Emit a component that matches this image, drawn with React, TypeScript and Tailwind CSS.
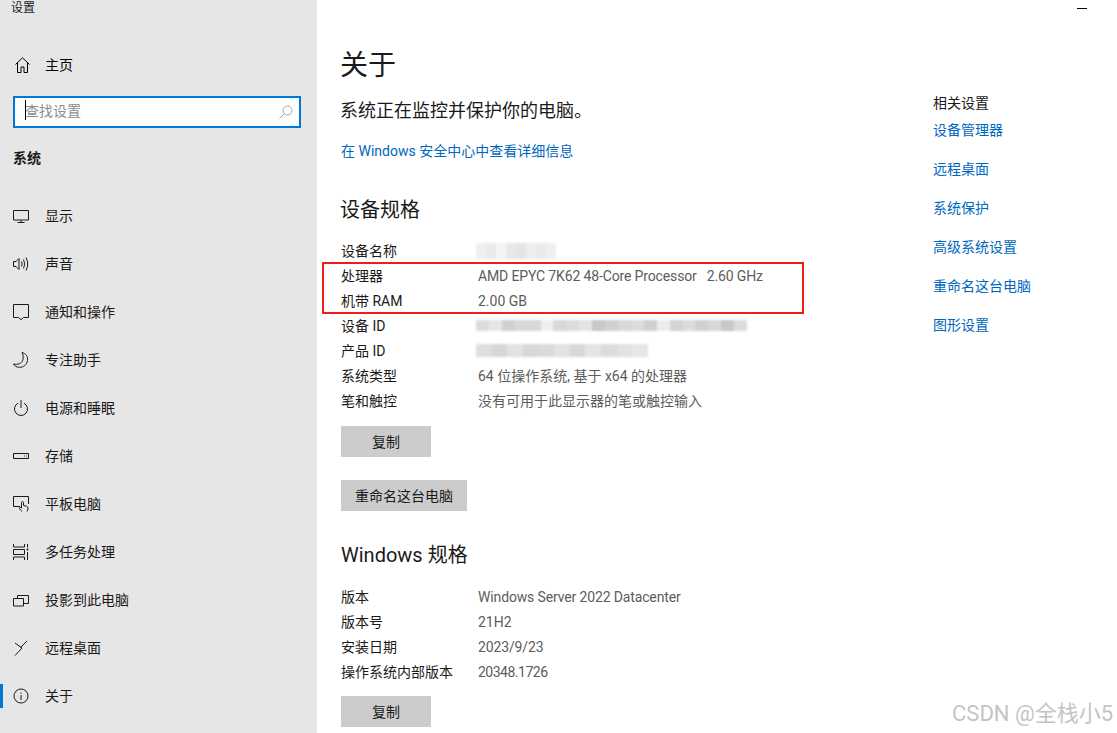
import { ReactNode } from 'react'

const FONT = "font-['Roboto','Noto_Sans_CJK_SC',sans-serif]"

const Ico = ({ children }: { children: ReactNode }) => (
  <svg width="16" height="16" viewBox="0 0 16 16" fill="none" stroke="#1a1a1a" strokeWidth="1" className="shrink-0">
    {children}
  </svg>
)

const navItems: { label: string; icon: ReactNode; active?: boolean }[] = [
  {
    label: '显示',
    icon: (
      <Ico>
        <path d="M0.500 2.500h15v9.500h-15zM8 12v2.500M4.500 14.500h7" />
      </Ico>
    ),
  },
  {
    label: '声音',
    icon: (
      <Ico>
        <path d="M0.500 5.500h2.500l3-3v11l-3-3H0.500zM8.500 5.500q1.500 2.500 0 5M10.500 3.500q2.500 4.500 0 9M13 1.500q3.500 6.500 0 13" />
      </Ico>
    ),
  },
  {
    label: '通知和操作',
    icon: (
      <Ico>
        <path d="M0.500 0.500h15v13h-5l-2.500 2.200-2.500-2.200h-5z" />
      </Ico>
    ),
  },
  {
    label: '专注助手',
    icon: (
      <Ico>
        <path d="M9 0.500c4 1 6 4 5.500 8-0.500 4-4 7-8 6.800-3 0-5-1.300-6-3.300 4.500 1 8-0.500 9.300-3.800 0.800-2.600 0.500-5.500-0.800-7.700z" />
      </Ico>
    ),
  },
  {
    label: '电源和睡眠',
    icon: (
      <Ico>
        <path d="M8 0v8M5 3.200a6.500 6.500 0 1 0 6 0" />
      </Ico>
    ),
  },
  {
    label: '存储',
    icon: (
      <Ico>
        <path d="M0.500 5.500h15v5h-15zM11 8h0.800M13 8h0.800" />
      </Ico>
    ),
  },
  {
    label: '平板电脑',
    icon: (
      <Ico>
        <path d="M7 10.500H0.500v-10h15v7.500M9 15.500c-1-0.700-2-2-2.500-3-0.500-1 0.700-1.500 1.500-0.800l0.500 0.500V6.500c0-1.300 2-1.300 2 0v3l3 0.700c1 0.300 1.500 1 1.500 2 0 1.500-0.500 2.500-1 3.300" />
      </Ico>
    ),
  },
  {
    label: '多任务处理',
    icon: (
      <Ico>
        <path d="M0.500 0v3h11V0M0.500 16v-3h11v3M0.500 5.500h11v5h-11zM14.500 0v3.500M14.500 8v8" />
        <circle cx="14.500" cy="5.500" r="1" fill="#1a1a1a" stroke="none" />
      </Ico>
    ),
  },
  {
    label: '投影到此电脑',
    icon: (
      <Ico>
        <path d="M4.500 6.500V3.500h11v8h-4.500M0.500 6.500h10v7.500h-10z" />
      </Ico>
    ),
  },
  {
    label: '远程桌面',
    icon: (
      <Ico>
        <path d="M14 1L7.500 7.500M2 3l7 5-7 7.500" />
      </Ico>
    ),
  },
  {
    label: '关于',
    active: true,
    icon: (
      <Ico>
        <circle cx="8" cy="8" r="7" />
        <path d="M8 7v5M8 4.500v1.200" />
      </Ico>
    ),
  },
]

const NavRow = ({ label, icon, active }: { label: string; icon: ReactNode; active?: boolean }) => (
  <div className="relative flex h-12 items-center gap-4 pl-[13px] text-sm text-[#1a1a1a]">
    {active && <div className="absolute left-0 top-3 h-6 w-[3px] bg-[#0078d7]" />}
    {icon}
    <span>{label}</span>
  </div>
)

const Sidebar = () => (
  <aside className="flex h-[733px] w-[317px] shrink-0 flex-col overflow-hidden bg-[#e6e6e6]">
    <div className="h-[17px] pl-[11px] text-xs leading-[17px] text-[#1a1a1a]">设置</div>
    <div className="mt-[24px] flex h-12 items-center gap-[15px] pl-[15px] text-sm text-black">
      <svg width="15" height="16" viewBox="0 0 15 16" fill="none" stroke="#000" strokeWidth="1">
        <path d="M0.500 7.500L7.500 0.800l7 6.700M2.500 6v9.500h3.500v-5.500h3v5.500h3.500V6" />
      </svg>
      <span>主页</span>
    </div>
    <div className="relative mx-[13px] mt-[7px] flex h-8 w-[288px] items-center justify-between border-2 border-[#0078d7] bg-white pl-[10px] pr-[6px] text-sm text-[#8c8c8c]">
      <div className="absolute left-[10px] top-[2px] h-[20px] w-px bg-black" />
      <span className="mt-[-2px]">查找设置</span>
      <svg width="14" height="14" viewBox="0 0 14 14" fill="none" stroke="#a6a6a6" strokeWidth="1">
        <circle cx="8.500" cy="5.500" r="4.500" />
        <path d="M5.200 8.800L0.500 13.500" />
      </svg>
    </div>
    <div className="mt-[19px] pl-[13px] text-sm leading-[22px] font-bold text-[#1a1a1a]">系统</div>
    <div className="mt-[23px] flex flex-col">
      {navItems.map(item => (
        <NavRow key={item.label} {...item} />
      ))}
    </div>
  </aside>
)

const Row = ({ label, children }: { label: string; children: ReactNode }) => (
  <div className="flex h-[25px] items-center text-sm">
    <div className="w-[137px] shrink-0 text-[#1a1a1a]">{label}</div>
    <div className="text-[#5c5c5c]">{children}</div>
  </div>
)

const Latin = ({ children }: { children: ReactNode }) => <span className="tracking-[-0.14px]">{children}</span>

const Mosaic = ({ shades, h, w }: { shades: string[]; h: string; w: string }) => (
  <div className={`ml-[-2px] flex ${h} ${w} blur-[1px]`}>
    {shades.map((c, i) => (
      <div key={i} className="flex-1" style={{ backgroundColor: c }} />
    ))}
  </div>
)

const idShades = ['#ddd', '#e6e6e6', '#d0d0d0', '#d8d8d8', '#d8d8d8', '#f0f0f0', '#d8d8d8', '#dcdcdc', '#e4e4e4', '#c8c8c8', '#d0d0d0', '#d8d8d8', '#dcdcdc', '#cfcfcf', '#ececec', '#d4d4d4', '#dcdcdc', '#d0d0d0', '#d8d8d8', '#c8c8c8', '#dcdcdc']
const nameShades = ['#f0f0f0', '#eaeaea', '#f4f4f4', '#e8e8e8', '#e4e4e4', '#eeeeee', '#eaeaea', '#f0f0f0']
const prodShades = ['#dedede', '#d6d6d6', '#e2e2e2', '#d8d8d8', '#dadada', '#e2e2e2', '#d8d8d8', '#e4e4e4', '#dcdcdc', '#e2e2e2', '#e6e6e6']

const GrayButton = ({ children, className }: { children: ReactNode; className: string }) => (
  <div className={`flex h-[31px] items-center justify-center bg-[#cccccc] text-sm text-[#1a1a1a] ${className}`}>
    {children}
  </div>
)

const links = ['设备管理器', '远程桌面', '系统保护', '高级系统设置', '重命名这台电脑', '图形设置']

export default function App() {
  return (
    <div className={`relative flex h-[733px] w-[1117px] overflow-hidden bg-white ${FONT}`}>
      <Sidebar />
      <main className="flex-1 pl-6">
        <h1 className="mt-[46px] ml-[-1px] text-[28px] leading-[40px] text-[#1a1a1a]">关于</h1>
        <p className="mt-[12px] ml-[-1px] text-lg leading-[26px] text-[#1a1a1a]">系统正在监控并保护你的电脑。</p>
        <a className="mt-[17px] block text-sm leading-[20px] text-[#0067c0]">在 Windows 安全中心中查看详细信息</a>
        <h2 className="mt-[35px] ml-[-1px] text-xl leading-[28px] text-[#1a1a1a]">设备规格</h2>
        <div className="mt-[14px] flex flex-col">
          <Row label="设备名称">
            <Mosaic shades={nameShades} h="h-[16px]" w="w-[80px]" />
          </Row>
          <Row label="处理器">
            <Latin>AMD EPYC 7K62 48-Core Processor&nbsp;&nbsp; 2.60 GHz</Latin>
          </Row>
          <Row label="机带 RAM">2.00 GB</Row>
          <Row label="设备 ID">
            <Mosaic shades={idShades} h="h-[11px]" w="w-[271px]" />
          </Row>
          <Row label="产品 ID">
            <Mosaic shades={prodShades} h="h-[13px]" w="w-[172px]" />
          </Row>
          <Row label="系统类型">64 位操作系统, 基于 x64 的处理器</Row>
          <Row label="笔和触控">没有可用于此显示器的笔或触控输入</Row>
        </div>
        <GrayButton className="mt-[13px] w-[90px]">复制</GrayButton>
        <GrayButton className="mt-[23px] w-[126px]">重命名这台电脑</GrayButton>
        <h2 className="mt-[30px] text-xl leading-[28px] text-[#1a1a1a]">Windows 规格</h2>
        <div className="mt-[15px] flex flex-col">
          <Row label="版本">
            <Latin>Windows Server 2022 Datacenter</Latin>
          </Row>
          <Row label="版本号">21H2</Row>
          <Row label="安装日期">
            <Latin>2023/9/23</Latin>
          </Row>
          <Row label="操作系统内部版本">
            <span className="tracking-[-0.5px]">20348.1726</span>
          </Row>
        </div>
        <GrayButton className="mt-[12px] w-[90px]">复制</GrayButton>
      </main>
      <section className="w-[184px] shrink-0 pt-[93px] text-sm">
        <div className="leading-[20px] text-[#1a1a1a]">相关设置</div>
        <div className="mt-[7px] flex flex-col gap-[19px]">
          {links.map(l => (
            <a key={l} className="leading-[20px] text-[#0067c0]">
              {l}
            </a>
          ))}
        </div>
      </section>
      {/* highlight drawn on the screenshot */}
      <div className="absolute left-[322px] top-[262px] h-[52px] w-[482px] border-2 border-[#f21c14]" />
      <div className="absolute left-[1077px] top-[8px] h-px w-[10px] bg-black" />
      <div className="absolute left-[952px] top-[699px] text-[22px] leading-[30px] text-[#c4c4c4]">CSDN @全栈小5</div>
    </div>
  )
}
